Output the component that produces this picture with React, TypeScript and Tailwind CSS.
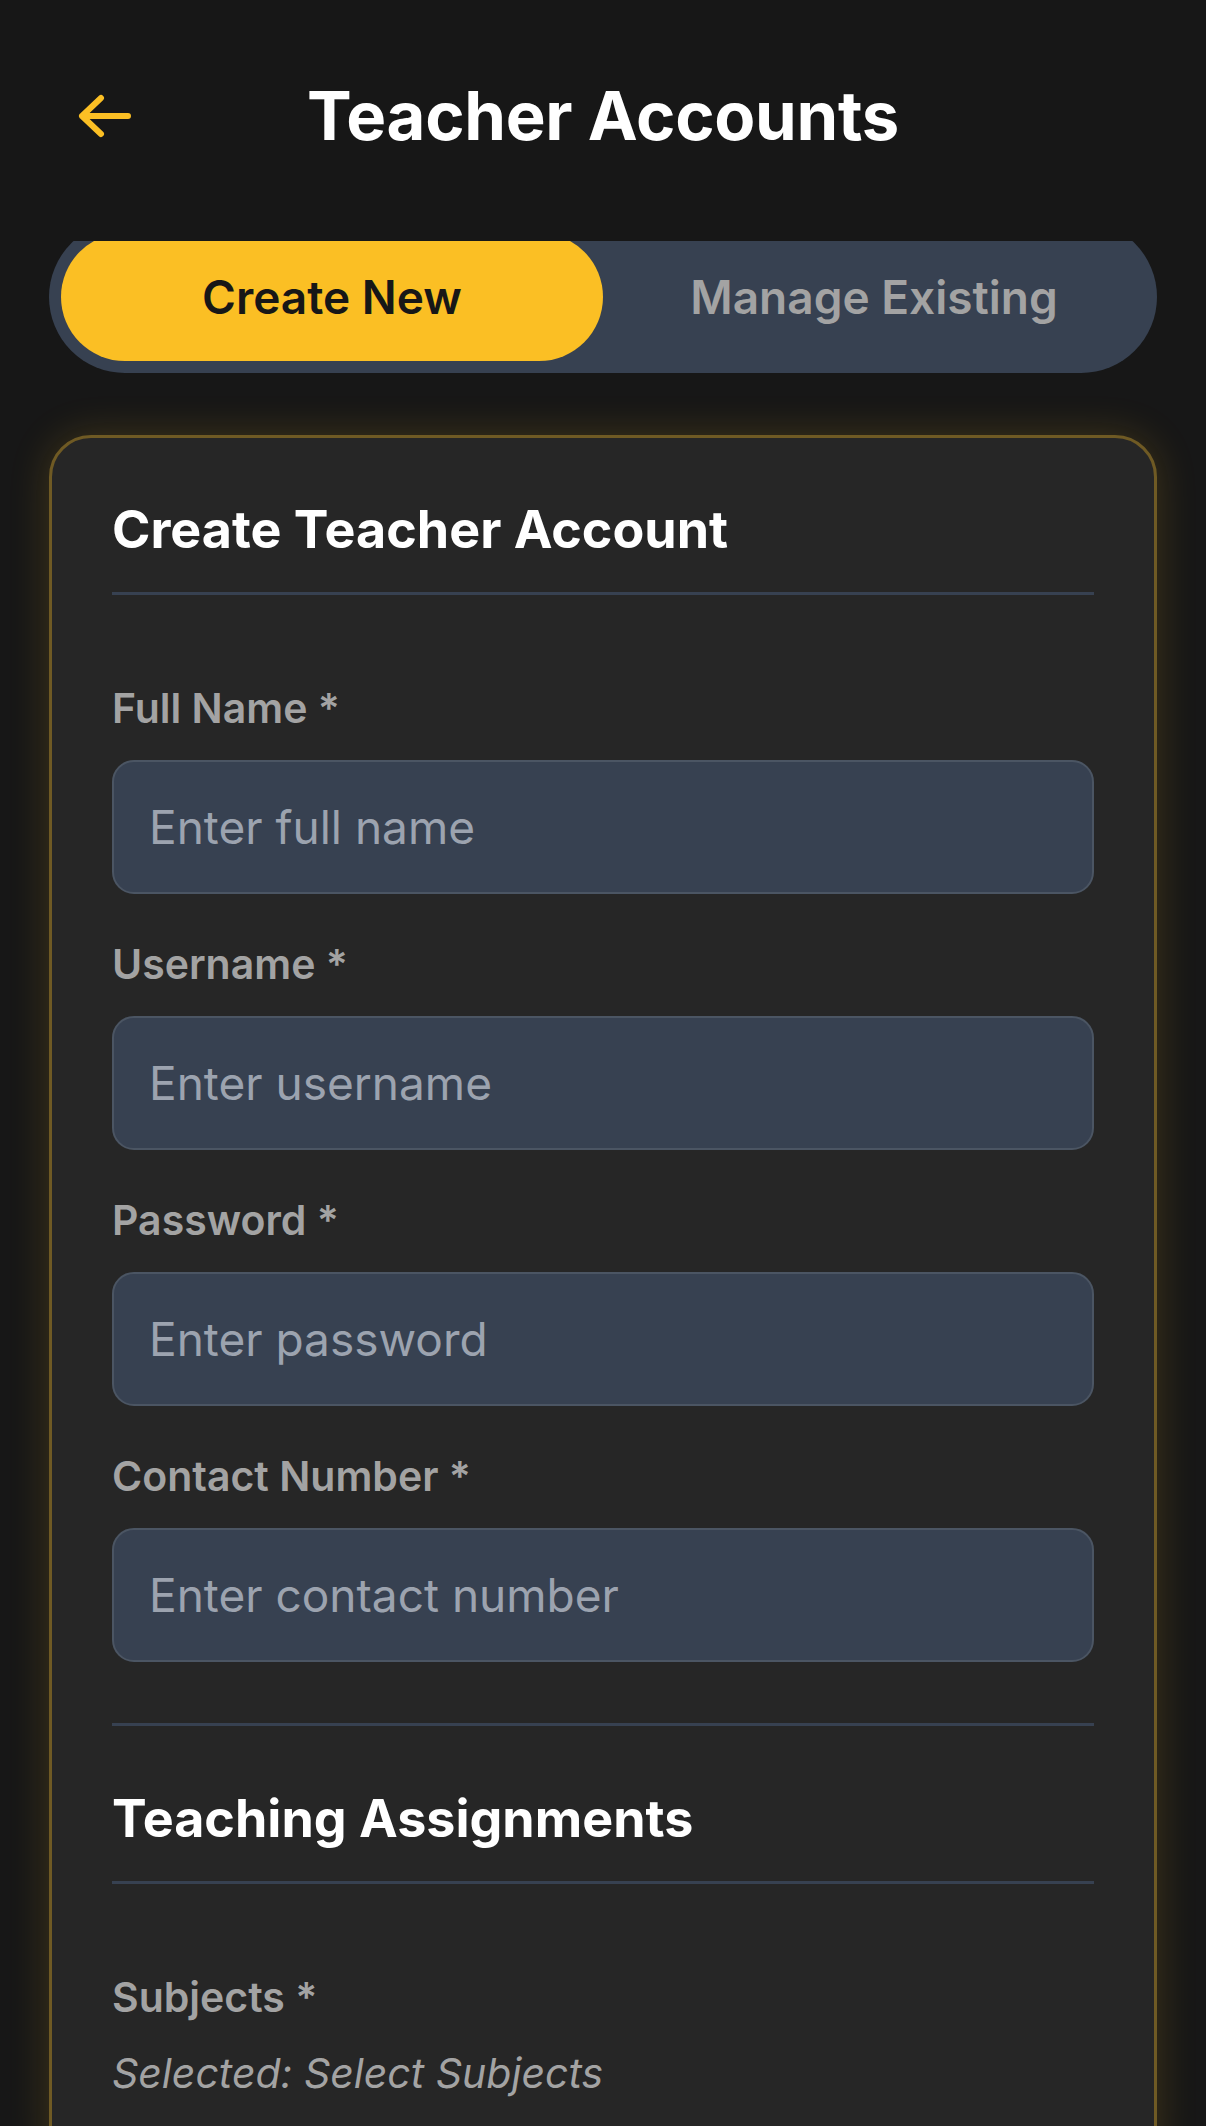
import React, { useState } from "react";

const fields = [
  { label: "Full Name *", placeholder: "Enter full name", type: "text" },
  { label: "Username *", placeholder: "Enter username", type: "text" },
  { label: "Password *", placeholder: "Enter password", type: "password" },
  { label: "Contact Number *", placeholder: "Enter contact number", type: "tel" },
];

const BackArrow = () => (
  <svg width="56" height="44" viewBox="0 0 56 44" fill="none">
    <path
      d="M52 22H6M25 4L6 22L25 40"
      stroke="#fbbf24"
      strokeWidth="6"
      strokeLinecap="round"
      strokeLinejoin="round"
    />
  </svg>
);

const App = () => {
  const [tab, setTab] = useState<"create" | "manage">("create");
  const [values, setValues] = useState<Record<string, string>>({});

  return (
    <div className="min-h-[2126px] w-full overflow-hidden bg-[#171717] font-['Inter','Noto_Sans',sans-serif]">
      {/* header */}
      <div className="px-[76px] pt-[66px] pb-[75px]">
        <div className="flex h-[100px] items-center">
          <button className="w-[56px] shrink-0">
            <BackArrow />
          </button>
          <h1 className="flex-1 text-center text-[67px] font-bold text-white tracking-[-0.3px]">
            Teacher Accounts
          </h1>
          <div className="w-[56px] shrink-0" />
        </div>
      </div>

      <div className="overflow-hidden px-[49px]">
        <div className="-mt-[20px] flex rounded-full bg-[#374151] p-[12px]">
          <button
            onClick={() => setTab("create")}
            className={`h-[128px] flex-1 rounded-full text-[46px] font-semibold ${
              tab === "create" ? "bg-[#fbbf24] text-[#171717]" : "text-[#a3a3a3]"
            }`}
          >
            Create New
          </button>
          <button
            onClick={() => setTab("manage")}
            className={`h-[128px] flex-1 rounded-full text-[46px] font-semibold ${
              tab === "manage" ? "bg-[#fbbf24] text-[#171717]" : "text-[#a3a3a3]"
            }`}
          >
            Manage Existing
          </button>
        </div>

        <div className="mt-[62px] rounded-[42px] border-[3px] border-[#6f5a24] bg-[#262626] px-[60px] pt-[59px] pb-[80px] shadow-[0_0_40px_rgba(251,191,36,0.18)]">
          <h2 className="text-[52px] leading-[66px] font-bold text-white">
            Create Teacher Account
          </h2>
          <div className="mt-[29px] h-[3px] bg-[#374151]" />

          <div className="mt-[89px] flex flex-col gap-[46px]">
            {fields.map((f) => (
              <div key={f.label} className="flex flex-col gap-[28px]">
                <label className="text-[41px] leading-[48px] font-semibold text-[#a3a3a3]">
                  {f.label}
                </label>
                <input
                  type={f.type}
                  placeholder={f.placeholder}
                  value={values[f.label] || ""}
                  onChange={(e) => setValues({ ...values, [f.label]: e.target.value })}
                  className="h-[134px] w-full rounded-[22px] border-2 border-[#4b5563] bg-[#374151] px-[35px] text-[46px] text-white outline-none placeholder:text-[#9ca3af]"
                />
              </div>
            ))}
          </div>

          <div className="mt-[61px] h-[3px] bg-[#374151]" />
          <h2 className="mt-[60px] text-[52px] leading-[66px] font-bold text-white">
            Teaching Assignments
          </h2>
          <div className="mt-[29px] h-[3px] bg-[#374151]" />

          <div className="mt-[89px]">
            <p className="text-[41px] leading-[48px] font-semibold text-[#a3a3a3]">Subjects *</p>
            <p className="mt-[28px] text-[41px] leading-[48px] italic text-[#a3a3a3]">
              Selected: Select Subjects
            </p>
          </div>
        </div>
      </div>
    </div>
  );
};

export default App;
